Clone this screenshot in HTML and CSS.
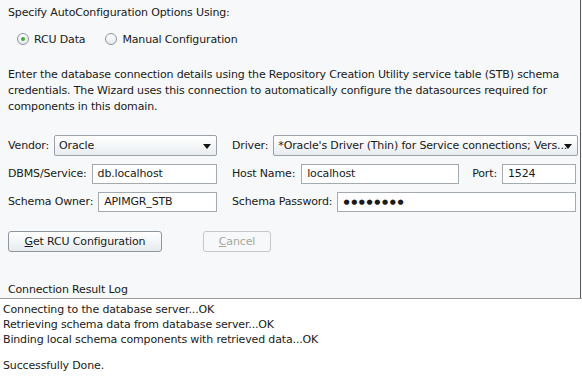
FILE: index.html
```html
<!DOCTYPE html>
<html lang="en">

<head>
    <meta charset="UTF-8" />
    <title>RCU Configuration</title>
    <link rel="stylesheet" href="styles.css">
</head>

<body>
    <div class="panel">
        <div class="title">Specify AutoConfiguration Options Using:</div>

        <!-- 单选项 -->
        <div class="radios">
            <label class="radio"><span class="dot checked"></span>RCU Data</label>
            <label class="radio"><span class="dot"></span>Manual Configuration</label>
        </div>

        <p class="desc">Enter the database connection details using the Repository Creation Utility service table (STB) schema credentials. The Wizard uses this connection to automatically configure the datasources required for components in this domain.</p>

        <!-- 连接表单 -->
        <div class="form">
            <div class="row">
                <div class="left">
                    <span class="lbl">Vendor:</span>
                    <div class="combo">Oracle<span class="arrow"></span></div>
                </div>
                <div class="right">
                    <span class="lbl">Driver:</span>
                    <div class="combo wide">*Oracle's Driver (Thin) for Service connections; Vers...<span class="arrow"></span></div>
                </div>
            </div>
            <div class="row">
                <div class="left">
                    <span class="lbl">DBMS/Service:</span>
                    <div class="field">db.localhost</div>
                </div>
                <div class="right">
                    <span class="lbl">Host Name:</span>
                    <div class="field host">localhost</div>
                    <span class="lbl port-lbl">Port:</span>
                    <div class="field">1524</div>
                </div>
            </div>
            <div class="row">
                <div class="left">
                    <span class="lbl">Schema Owner:</span>
                    <div class="field">APIMGR_STB</div>
                </div>
                <div class="right">
                    <span class="lbl">Schema Password:</span>
                    <div class="field pass">&#9679;&#9679;&#9679;&#9679;&#9679;&#9679;&#9679;&#9679;</div>
                </div>
            </div>
        </div>

        <!-- 按钮 -->
        <div class="buttons">
            <button class="btn get"><u>G</u>et RCU Configuration</button>
            <button class="btn cancel" disabled><u>C</u>ancel</button>
        </div>

        <div class="log-label">Connection Result Log</div>
    </div>

    <!-- 日志 -->
    <div class="log">
        <div>Connecting to the database server...OK</div>
        <div>Retrieving schema data from database server...OK</div>
        <div>Binding local schema components with retrieved data...OK</div>
        <div class="blank"></div>
        <div>Successfully Done.</div>
    </div>
</body>

</html>
```

FILE: styles.css
```css
* {
    margin: 0;
    padding: 0;
    box-sizing: border-box;
}

body {
    display: flex;
    flex-direction: column;
    width: 582px;
    height: 382px;
    overflow: hidden;
    background-color: #f6f8f9;
    font-family: "DejaVu Sans", sans-serif;
    font-size: 11px;
    letter-spacing: -0.15px;
    color: #1a1a1a;
}

.panel {
    padding: 5px 0 0 8px;
    border-right: 1px solid #5a5a5a;
    margin-right: 1px;
}

.title {
    line-height: 16px;
}

.radios {
    display: flex;
    gap: 20px;
    height: 20px;
    margin: 8px 0 0 9px;
    align-items: center;
}

.radio {
    display: flex;
    align-items: center;
    gap: 5px;
}

.dot {
    display: inline-block;
    width: 12px;
    height: 12px;
    border: 1px solid #8c949c;
    border-radius: 50%;
    background: linear-gradient(#ffffff, #e6eaed);
    position: relative;
}

.dot.checked::after {
    content: "";
    position: absolute;
    left: 3px;
    top: 3px;
    width: 4px;
    height: 4px;
    border-radius: 50%;
    background-color: #3fae3a;
}

.desc {
    margin-top: 18px;
    line-height: 16px;
    padding-right: 20px;
}

.form {
    display: flex;
    flex-direction: column;
    gap: 7px;
    margin-top: 20px;
}

.row {
    display: flex;
    align-items: center;
    height: 21px;
}

.lbl {
    white-space: nowrap;
}

.left {
    display: flex;
    flex: none;
    align-items: center;
    gap: 5px;
    width: 209px;
}

.right {
    display: flex;
    align-items: center;
    gap: 5px;
    margin-left: 15px;
    flex: 1;
    min-width: 0;
    padding-right: 4px;
}

.combo {
    position: relative;
    flex: 1;
    min-width: 0;
    height: 21px;
    line-height: 19px;
    padding-left: 4px;
    border: 1px solid #9aa1a8;
    border-radius: 2px;
    background: linear-gradient(#ffffff, #e9edf0);
    white-space: nowrap;
    overflow: hidden;
}

.combo.wide {
    margin-right: -2px;
}

.combo .arrow {
    position: absolute;
    right: 5px;
    top: 8px;
    border-left: 4px solid transparent;
    border-right: 4px solid transparent;
    border-top: 5px solid #111;
}

.field {
    flex: 1;
    min-width: 0;
    height: 20px;
    line-height: 18px;
    padding-left: 5px;
    border: 1px solid #a3aab0;
    background-color: #ffffff;
    white-space: nowrap;
}

.field.host {
    flex: none;
    width: 158px;
    margin-left: 1px;
}

.lbl.port-lbl {
    margin-left: 8px;
}

.field.pass {
    font-size: 7px;
    letter-spacing: 1.6px;
}

.buttons {
    display: flex;
    gap: 41px;
    margin-top: 19px;
}

.btn {
    height: 21px;
    font-family: inherit;
    font-size: 11px;
    letter-spacing: -0.15px;
    color: #1a1a1a;
    border: 1px solid #8e969d;
    border-radius: 3px;
    background: linear-gradient(#ffffff, #e7ebee);
}

.btn.get {
    width: 154px;
}

.btn.cancel {
    width: 68px;
    color: #a3a99c;
    border-color: #c3c8cc;
    background: #f6f8f9;
}

.log-label {
    margin-top: 30px;
    line-height: 16px;
}

.log {
    flex: 1;
    padding: 3px 0 0 3px;
    border-top: 1px solid #9a9a9a;
    background-color: #ffffff;
    line-height: 15px;
}

.log .blank {
    height: 11px;
}
```
